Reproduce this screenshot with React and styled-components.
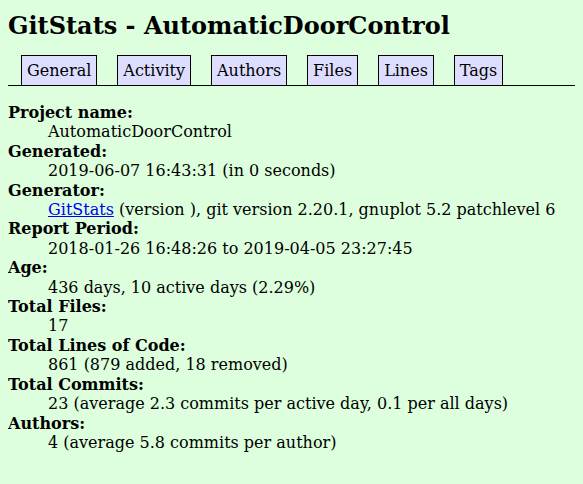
import React from "react";
import styled, { createGlobalStyle } from "styled-components";

const GlobalStyle = createGlobalStyle`
  body {
    margin: 8px;
    background: #ddffdd;
    color: black;
    font-family: "DejaVu Serif", serif;
  }
`;

const Title = styled.h1`
  font-family: "DejaVu Serif", serif;
  font-size: 24px;
  font-weight: bold;
  margin: 4px 0 15px;
  line-height: 28px;
`;

const Nav = styled.ul`
  display: flex;
  gap: 20px;
  list-style: none;
  margin: 0 -8px 17px 0;
  padding: 0 0 0 13px;
  height: 30px;
  border-bottom: 1px solid black;
  align-items: flex-start;
`;

const Tab = styled.li`
  padding: 4px 5px 3px;
  height: 22px;
  line-height: 22px;
  border: 1px solid black;
  border-bottom: none;
  background: #ddddff;
  font-size: 16px;
`;

const Info = styled.dl`
  margin: 0;
  line-height: 19.4px;
`;

const Term = styled.dt`
  font-family: "DejaVu Serif", serif;
  font-weight: bold;
  font-size: 16px;
  &::after { content: ":"; }
`;

const Value = styled.dd`
  font-family: "DejaVu Serif", serif;
  font-size: 16px;
  margin-left: 40px;
`;

const Link = styled.a`
  color: #0000ee;
  text-decoration: underline;
`;

const tabs = ["General", "Activity", "Authors", "Files", "Lines", "Tags"];

export default function App() {
  return (
    <>
      <GlobalStyle />
      <Title>GitStats - AutomaticDoorControl</Title>
      <Nav>
        {tabs.map((t) => (
          <Tab key={t}>{t}</Tab>
        ))}
      </Nav>
      <Info>
        <Term>Project name</Term>
        <Value>AutomaticDoorControl</Value>
        <Term>Generated</Term>
        <Value>2019-06-07 16:43:31 (in 0 seconds)</Value>
        <Term>Generator</Term>
        <Value>
          <Link href="#">GitStats</Link> (version ), git version 2.20.1, gnuplot 5.2 patchlevel 6
        </Value>
        <Term>Report Period</Term>
        <Value>2018-01-26 16:48:26 to 2019-04-05 23:27:45</Value>
        <Term>Age</Term>
        <Value>436 days, 10 active days (2.29%)</Value>
        <Term>Total Files</Term>
        <Value>17</Value>
        <Term>Total Lines of Code</Term>
        <Value>861 (879 added, 18 removed)</Value>
        <Term>Total Commits</Term>
        <Value>23 (average 2.3 commits per active day, 0.1 per all days)</Value>
        <Term>Authors</Term>
        <Value>4 (average 5.8 commits per author)</Value>
      </Info>
    </>
  );
}
